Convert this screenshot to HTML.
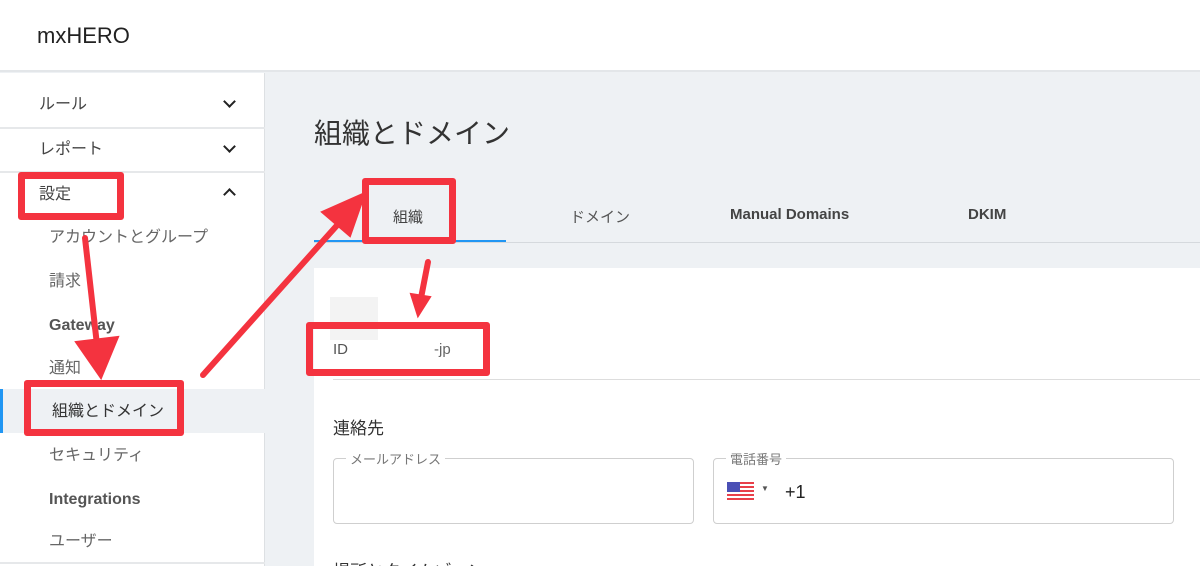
<!DOCTYPE html>
<html style="width:1200px;height:566px;overflow:hidden"><head><meta charset="utf-8"><style>
*{margin:0;padding:0;box-sizing:border-box}
body{width:1200px;height:566px;overflow:hidden;background:#eef1f4;font-family:"Liberation Sans","Noto Sans CJK JP",sans-serif;color:#333;position:relative}
.abs{position:absolute}
.hdr{left:0;top:0;width:1200px;height:72px;background:#fff;border-bottom:2px solid #e3e6e9}
.logo{left:37px;top:23px;font-size:22px;color:#222}
.side{left:0;top:73px;width:265px;height:493px;background:#fff;border-right:1px solid #dde0e3}
.it{position:absolute;left:0;width:265px;font-size:16px;color:#444;line-height:20px}
.div{position:absolute;left:0;width:265px;height:2px;background:#e6e8ea}
.chev{position:absolute;left:225px;width:9px;height:9px;border-right:2px solid #222;border-bottom:2px solid #222}
.red{position:absolute;border:7px solid #f4333f;border-radius:3px}
.tab{position:absolute;top:206px;font-size:15px;color:#444}
</style></head><body>
<div class="abs hdr"></div>
<div class="abs logo">mxHERO</div>
<div class="abs side"></div>
<div class="it" style="top:95px;padding-left:39px">ルール</div>
<div class="chev" style="top:97px;transform:rotate(45deg)"></div>
<div class="div" style="top:127px"></div>
<div class="it" style="top:140px;padding-left:39px">レポート</div>
<div class="chev" style="top:142px;transform:rotate(45deg)"></div>
<div class="div" style="top:171px"></div>
<div class="it" style="top:185px;padding-left:39px">設定</div>
<div class="chev" style="top:190px;transform:rotate(225deg)"></div>
<div class="it" style="top:228px;padding-left:49px;color:#666">アカウントとグループ</div>
<div class="it" style="top:272px;padding-left:49px;color:#666">請求</div>
<div class="it" style="top:316px;padding-left:49px;font-weight:bold;color:#555">Gateway</div>
<div class="it" style="top:359px;padding-left:49px;color:#666">通知</div>
<div class="abs" style="left:0;top:389px;width:265px;height:44px;background:#eef1f4"></div>
<div class="abs" style="left:0;top:389px;width:3px;height:44px;background:#2196f3"></div>
<div class="it" style="top:402px;padding-left:52px;color:#333">組織とドメイン</div>
<div class="it" style="top:446px;padding-left:49px;color:#666">セキュリティ</div>
<div class="it" style="top:490px;padding-left:49px;font-weight:bold;color:#555">Integrations</div>
<div class="it" style="top:532px;padding-left:49px;color:#666">ユーザー</div>
<div class="div" style="top:562px"></div>

<div class="abs" style="left:314px;top:112px;font-size:28px;color:#333">組織とドメイン</div>
<div class="abs" style="left:314px;top:242px;width:886px;height:1px;background:#d5d9dd"></div>
<div class="abs" style="left:314px;top:240px;width:192px;height:2px;background:#2196f3"></div>
<div class="tab" style="left:393px">組織</div>
<div class="tab" style="left:570px;color:#555">ドメイン</div>
<div class="tab" style="left:730px;font-weight:bold;color:#444">Manual Domains</div>
<div class="tab" style="left:968px;font-weight:bold;color:#444">DKIM</div>

<div class="abs" style="left:314px;top:268px;width:886px;height:298px;background:#fff"></div>
<div class="abs" style="left:330px;top:297px;width:48px;height:43px;background:#f3f3f3"></div>
<div class="abs" style="left:333px;top:341px;font-size:15px;color:#555">ID</div>
<div class="abs" style="left:434px;top:341px;font-size:15px;color:#666">-jp</div>
<div class="abs" style="left:333px;top:379px;width:867px;height:1px;background:#ddd"></div>
<div class="abs" style="left:333px;top:414px;font-size:17px;color:#333">連絡先</div>
<div class="abs" style="left:333px;top:458px;width:361px;height:66px;border:1px solid #cfcfcf;border-radius:4px"></div>
<div class="abs" style="left:346px;top:449px;padding:0 4px;background:#fff;font-size:13px;color:#777">メールアドレス</div>
<div class="abs" style="left:713px;top:458px;width:461px;height:66px;border:1px solid #cfcfcf;border-radius:4px"></div>
<div class="abs" style="left:726px;top:449px;padding:0 4px;background:#fff;font-size:13px;color:#777">電話番号</div>
<div class="abs" style="left:727px;top:482px;width:27px;height:18px;background:repeating-linear-gradient(#e8404a 0 2px,#fff 2px 4px)"></div>
<div class="abs" style="left:727px;top:482px;width:13px;height:10px;background:#4a4fb5"></div>
<div class="abs" style="left:761px;top:484px;font-size:8px;color:#555">▼</div>
<div class="abs" style="left:785px;top:482px;font-size:18px;color:#222">+1</div>
<div class="abs" style="left:333px;top:557px;font-size:17px;color:#333">場所とタイムゾーン</div>

<div class="red" style="left:18px;top:172px;width:106px;height:48px"></div>
<div class="red" style="left:362px;top:178px;width:94px;height:66px"></div>
<div class="red" style="left:306px;top:322px;width:184px;height:54px"></div>
<div class="red" style="left:24px;top:380px;width:160px;height:56px"></div>
<svg class="abs" style="left:0;top:0" width="1200" height="566">
<g stroke="#f4333f" stroke-width="6" fill="#f4333f" stroke-linecap="round">
<line x1="85" y1="238" x2="97" y2="345"/>
<polygon points="76,342 118,337 101,378" stroke-width="2"/>
<line x1="203" y1="375" x2="340" y2="222"/>
<polygon points="322,212 365,193 350,236" stroke-width="2"/>
<line x1="428" y1="262" x2="421" y2="298"/>
<polygon points="411,294 430,297 418,316" stroke-width="2"/>
</g></svg>
</body></html>
